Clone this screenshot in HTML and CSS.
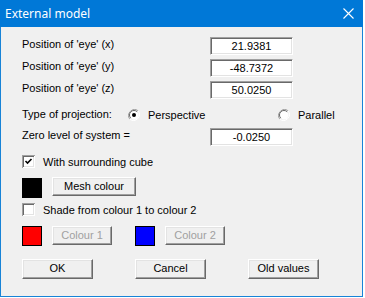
FILE: index.html
```html
<!DOCTYPE html>
<html lang="en">
<head>
  <meta charset="UTF-8">
  <title>External model</title>
  <link rel="stylesheet" href="styles.css">
</head>
<body>
  <div class="window">
    <div class="titlebar">
      <span class="title">External model</span>
      <svg class="close" width="11" height="11" viewBox="0 0 11 11">
        <path d="M0.5 0.5 L10.5 10.5 M10.5 0.5 L0.5 10.5" stroke="#fff" stroke-width="1.1" fill="none"/>
      </svg>
    </div>
    <div class="client">
      <div class="field">
        <span class="label">Position of 'eye' (x)</span>
        <div class="edit">21.9381</div>
      </div>
      <div class="field">
        <span class="label">Position of 'eye' (y)</span>
        <div class="edit">-48.7372</div>
      </div>
      <div class="field">
        <span class="label">Position of 'eye' (z)</span>
        <div class="edit">50.0250</div>
      </div>

      <div class="proj">
        <span class="proj-label">Type of projection:</span>
        <div class="radio-item first">
          <svg class="radio" width="12" height="12" viewBox="0 0 12 12">
            <path d="M10.2 1.8 A6 6 0 0 0 1.8 10.2" stroke="#a0a0a0" fill="none"/>
            <path d="M10.2 1.8 A6 6 0 0 1 1.8 10.2" stroke="#ffffff" fill="none"/>
            <circle cx="6" cy="6" r="4.5" fill="#fff"/>
            <path d="M9.2 2.8 A4.5 4.5 0 0 0 2.8 9.2" stroke="#696969" fill="none"/>
            <circle cx="6" cy="6" r="2" fill="#000"/>
          </svg>
          <span>Perspective</span>
        </div>
        <div class="radio-item">
          <svg class="radio" width="12" height="12" viewBox="0 0 12 12">
            <path d="M10.2 1.8 A6 6 0 0 0 1.8 10.2" stroke="#a0a0a0" fill="none"/>
            <path d="M10.2 1.8 A6 6 0 0 1 1.8 10.2" stroke="#ffffff" fill="none"/>
            <circle cx="6" cy="6" r="4.5" fill="#fff"/>
            <path d="M9.2 2.8 A4.5 4.5 0 0 0 2.8 9.2" stroke="#696969" fill="none"/>
          </svg>
          <span>Parallel</span>
        </div>
      </div>

      <div class="field zero">
        <span class="label">Zero level of system =</span>
        <div class="edit">-0.0250</div>
      </div>

      <div class="check-row cube">
        <svg class="check" width="13" height="13" viewBox="0 0 13 13">
          <rect x="0" y="0" width="13" height="13" fill="#a0a0a0"/>
          <rect x="1" y="1" width="12" height="12" fill="#fff"/>
          <rect x="1" y="1" width="11" height="11" fill="#696969"/>
          <rect x="2" y="2" width="10" height="10" fill="#e3e3e3"/>
          <rect x="2" y="2" width="9" height="9" fill="#fff"/>
          <path d="M3.5 6 L5.5 8 L9.5 4" stroke="#000" stroke-width="1.6" fill="none"/>
        </svg>
        <span>With surrounding cube</span>
      </div>

      <div class="colour-row mesh">
        <div class="swatch black"></div>
        <div class="btn mesh-btn">Mesh colour</div>
      </div>

      <div class="check-row shade">
        <svg class="check" width="13" height="13" viewBox="0 0 13 13">
          <rect x="0" y="0" width="13" height="13" fill="#a0a0a0"/>
          <rect x="1" y="1" width="12" height="12" fill="#fff"/>
          <rect x="1" y="1" width="11" height="11" fill="#696969"/>
          <rect x="2" y="2" width="10" height="10" fill="#e3e3e3"/>
          <rect x="2" y="2" width="9" height="9" fill="#fff"/>
        </svg>
        <span>Shade from colour 1 to colour 2</span>
      </div>

      <div class="colour-row pair">
        <div class="swatch red"></div>
        <div class="btn small disabled">Colour 1</div>
        <div class="swatch blue"></div>
        <div class="btn small disabled">Colour 2</div>
      </div>

      <div class="actions">
        <div class="btn action">OK</div>
        <div class="btn action">Cancel</div>
        <div class="btn action">Old values</div>
      </div>
    </div>
  </div>
</body>
</html>
```

FILE: styles.css
```css
body {
  margin: 0;
  background-color: #fff;
  font-family: "Liberation Sans", Arial, sans-serif;
  font-size: 11px;
  color: #000;
}
.window {
  width: 361px;
  height: 296px;
  border: 1px solid #1883d7;
  border-top: none;
  background-color: #f0f0f0;
  display: flex;
  flex-direction: column;
}
.titlebar {
  height: 27px;
  background-color: #0078d7;
  display: flex;
  align-items: center;
  justify-content: space-between;
  margin: 0 -1px;
  padding: 0 9px 0 5px;
}
.title {
  font-family: "Noto Sans", sans-serif;
  font-size: 12px;
  color: #fff;
  margin-top: -1px;
}
.close {
  margin-top: -1px;
}
.client {
  padding: 10px 0 0 21px;
  display: flex;
  flex-direction: column;
}
.field {
  display: flex;
  align-items: flex-start;
  height: 18px;
  margin-bottom: 4px;
}
.label {
  width: 188px;
  line-height: 13px;
  padding-top: 1px;
}
.edit {
  width: 79px;
  height: 14px;
  line-height: 14px;
  text-align: center;
  background-color: #fff;
  border-top: 1px solid #a0a0a0;
  border-left: 1px solid #a0a0a0;
  border-right: 1px solid #fff;
  border-bottom: 1px solid #fff;
  box-shadow: inset 1px 1px #696969, inset -1px -1px #e3e3e3;
  padding: 1px;
}
.proj {
  display: flex;
  align-items: center;
  height: 18px;
  margin-top: 3px;
  margin-bottom: 4px;
}
.proj-label {
  width: 106px;
  margin-top: -3px;
}
.radio-item {
  display: flex;
  align-items: center;
  gap: 8px;
}
.radio-item.first {
  width: 150px;
}
.zero {
  margin-bottom: 0;
}
.check-row {
  display: flex;
  align-items: center;
  gap: 8px;
  height: 13px;
}
.cube {
  margin-top: 9px;
}
.shade {
  margin-top: 5px;
}
.colour-row {
  display: flex;
  align-items: flex-start;
  height: 20px;
}
.mesh {
  margin-top: 10px;
}
.pair {
  margin-top: 10px;
}
.swatch {
  width: 18px;
  height: 18px;
  border: 1px solid #000;
  margin-right: 10px;
}
.black { background-color: #000; }
.red { background-color: #f00; }
.blue { background-color: #00f; }
.btn {
  box-sizing: border-box;
  height: 19px;
  text-align: center;
  line-height: 16px;
  background-color: #f0f0f0;
  border-top: 1px solid #fff;
  border-left: 1px solid #fff;
  border-right: 1px solid #696969;
  border-bottom: 1px solid #696969;
  box-shadow: inset -1px -1px #a0a0a0, inset 1px 1px #e3e3e3;
}
.mesh-btn {
  width: 84px;
  margin-top: -1px;
}
.small {
  width: 60px;
  margin-right: 23px;
}
.disabled {
  color: #a0a0a0;
}
.actions {
  display: flex;
  gap: 42px;
  margin-top: 13px;
}
.action {
  width: 71px;
  height: 20px;
  line-height: 17px;
}
```
